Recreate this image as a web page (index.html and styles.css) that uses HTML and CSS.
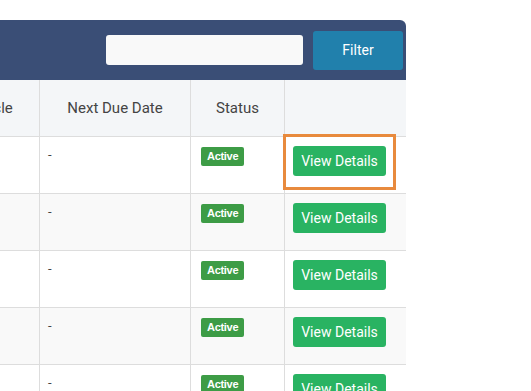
FILE: index.html
```html
<!doctype html>
<html>
  <head>
    <title>Invoices</title>
    <meta charset="utf-8">
    <link rel="stylesheet" href="styles.css">
  </head>
  <body>
    <div class="panel">
      <div class="toolbar">
        <input type="text" class="search">
        <button class="btn-filter">Filter</button>
      </div>
      <div class="table-wrap">
        <table class="list">
          <thead>
            <tr>
              <th class="col-cycle">Billing Cycle</th>
              <th class="col-due">Next Due Date</th>
              <th class="col-status">Status</th>
              <th class="col-action"></th>
            </tr>
          </thead>
          <tbody>
            <tr>
              <td></td>
              <td>-</td>
              <td><span class="badge">Active</span></td>
              <td class="action">
                <button class="btn-view">View Details</button>
                <span class="highlight"></span>
              </td>
            </tr>
            <tr class="alt">
              <td></td>
              <td>-</td>
              <td><span class="badge">Active</span></td>
              <td class="action"><button class="btn-view">View Details</button></td>
            </tr>
            <tr>
              <td></td>
              <td>-</td>
              <td><span class="badge">Active</span></td>
              <td class="action"><button class="btn-view">View Details</button></td>
            </tr>
            <tr class="alt">
              <td></td>
              <td>-</td>
              <td><span class="badge">Active</span></td>
              <td class="action"><button class="btn-view">View Details</button></td>
            </tr>
            <tr>
              <td></td>
              <td>-</td>
              <td><span class="badge">Active</span></td>
              <td class="action"><button class="btn-view">View Details</button></td>
            </tr>
          </tbody>
        </table>
      </div>
    </div>
  </body>
</html>
```

FILE: styles.css
```css
body {
  margin: 0;
  background: #fff;
  font-family: Roboto, "Liberation Sans", sans-serif;
  font-size: 14px;
  color: #333;
  height: 391px;
  overflow: hidden;
}
.panel {
  width: 406px;
  margin-top: 20px;
}
.toolbar {
  display: flex;
  justify-content: flex-end;
  align-items: center;
  height: 60px;
  padding-right: 3px;
  box-sizing: border-box;
  background: #3a4e76;
  border-top-right-radius: 6px;
}
.search {
  width: 197px;
  height: 30px;
  box-sizing: border-box;
  border: none;
  border-radius: 3px;
  background: #f9f9f9;
  margin-right: 10px;
}
.btn-filter {
  width: 90px;
  height: 39px;
  border: none;
  border-radius: 3px;
  background: #2180ac;
  color: #fff;
  font-family: Roboto, "Liberation Sans", sans-serif;
  font-size: 14px;
}
.table-wrap {
  overflow: hidden;
}
.list {
  border-collapse: collapse;
  margin-left: -95px;
  table-layout: fixed;
  width: 501px;
}
.col-cycle { width: 133px; }
.col-due { width: 150px; }
.col-status { width: 93px; }
.col-action { width: 125px; }
.list th {
  height: 56px;
  background: #f4f6f8;
  font-weight: normal;
  font-size: 15px;
  color: #444;
  border: 1px solid #ddd;
  border-top: none;
  text-align: center;
  padding: 0;
}
.list td {
  height: 57px;
  box-sizing: border-box;
  border: 1px solid #ddd;
  padding: 10px 8px;
  vertical-align: top;
  font-size: 13px;
  color: #444;
}
.list tr.alt td {
  background: #f9f9f9;
}
.badge {
  display: inline-block;
  margin-left: 2px;
  padding: 3px 6px;
  background: #3d9c46;
  color: #fff;
  font-family: "Liberation Sans", sans-serif;
  font-weight: bold;
  font-size: 11px;
  line-height: 13px;
  border-radius: 2px;
  letter-spacing: -0.3px;
}
.action {
  position: relative;
}
.btn-view {
  display: block;
  width: 93px;
  height: 30px;
  margin-top: -1px;
  border: none;
  border-radius: 3px;
  background: #29b362;
  color: #fff;
  font-family: Roboto, "Liberation Sans", sans-serif;
  font-size: 14px;
  padding: 0;
}
.highlight {
  position: absolute;
  left: -2px;
  top: -3px;
  width: 107px;
  height: 50px;
  border: 3px solid #e88a3d;
}
```
